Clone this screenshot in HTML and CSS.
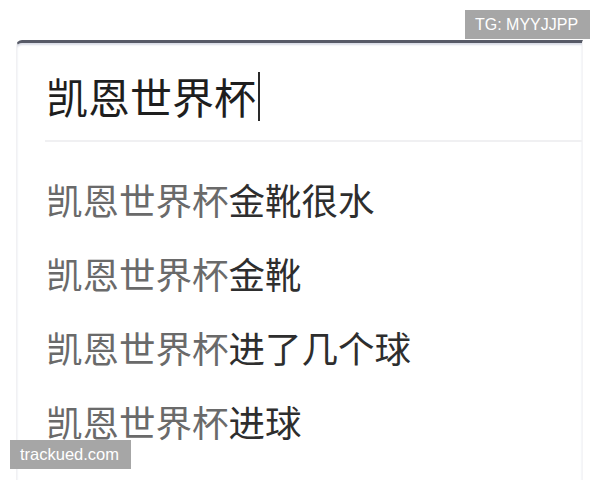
FILE: index.html
```html
<!DOCTYPE html>
<html lang="zh-CN">
<head>
<meta charset="utf-8">
<link rel="stylesheet" href="styles.css">
</head>
<body>
<div class="panel">
  <div class="input-row">
    <span class="query">凯恩世界杯</span><span class="cursor"></span>
  </div>
  <div class="divider"></div>
  <ul class="suggestions">
    <li><span class="match">凯恩世界杯</span><span class="rest">金靴很水</span></li>
    <li><span class="match">凯恩世界杯</span><span class="rest">金靴</span></li>
    <li><span class="match">凯恩世界杯</span><span class="rest">进了几个球</span></li>
    <li><span class="match">凯恩世界杯</span><span class="rest">进球</span></li>
  </ul>
</div>
<div class="badge badge-tg">TG: MYYJJPP</div>
<div class="badge badge-site">trackued.com</div>
</body>
</html>
```
FILE: styles.css
```css
html, body {
  margin: 0;
  padding: 0;
  width: 600px;
  height: 480px;
  overflow: hidden;
  background: #ffffff;
}

body {
  position: relative;
  font-family: "Noto Sans CJK SC", "Noto Sans", sans-serif;
}

.panel {
  margin: 40px 0 0 16px;
  width: 567px;
  height: 440px;
  overflow: hidden;
  box-sizing: border-box;
  border-top: 3px solid #575a67;
  border-left: 1px solid #f1f1f3;
  border-right: 1px solid #f4f4f6;
  border-top-left-radius: 6px;
  box-shadow: inset 0 2px 2px #d9dce6;
  background: #ffffff;
}

.input-row {
  display: flex;
  align-items: center;
  padding: 33px 0 24px 29px;
  height: 40px;
}

.query {
  font-size: 42px;
  line-height: 40px;
  color: #1e1e1e;
}

.cursor {
  display: inline-block;
  width: 2px;
  height: 49px;
  margin-left: 2px;
  background: #2a2a2a;
}

.divider {
  margin-left: 28px;
  height: 2px;
  background: #f0f0f2;
}

.suggestions {
  list-style: none;
  margin: 0;
  padding: 21px 0 0 29px;
}

.suggestions li {
  font-size: 36.5px;
  line-height: 74px;
  height: 74px;
  white-space: nowrap;
}

.match {
  color: #6a6a6a;
}

.rest {
  color: #2e2e2e;
}

.badge {
  position: absolute;
  background: #a6a6a6;
  color: #ffffff;
  font-family: "Liberation Sans", Arial, sans-serif;
  font-size: 16px;
  height: 29px;
  line-height: 29px;
  box-sizing: border-box;
  padding: 0 10px;
  white-space: nowrap;
}

.badge-tg {
  top: 10px;
  left: 465px;
  width: 125px;
}

.badge-site {
  top: 440px;
  left: 10px;
  width: 121px;
  font-size: 16.5px;
}
```
